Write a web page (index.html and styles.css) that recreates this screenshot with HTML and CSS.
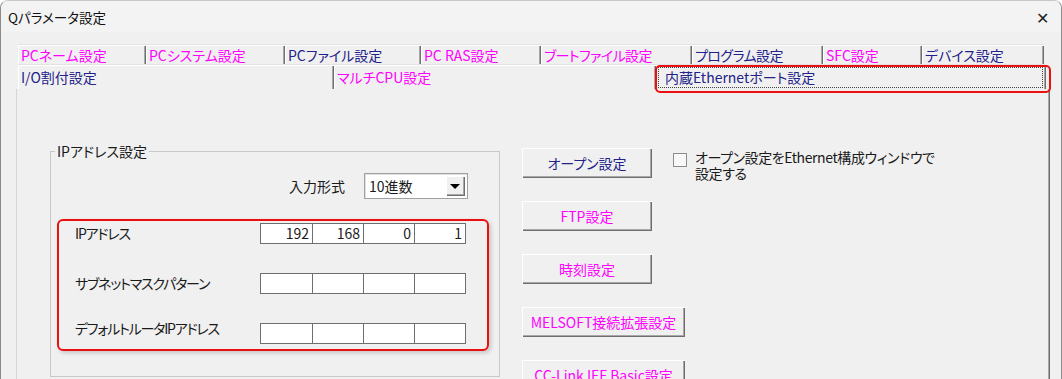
FILE: index.html
```html
<!DOCTYPE html>
<html lang="ja">

<head>
    <meta charset="UTF-8">
    <title>Qパラメータ設定</title>
    <link rel="stylesheet" href="styles.css">
</head>

<body>
    <div class="window">
        <div class="titlebar">
            <span class="title">Qパラメータ設定</span>
            <span class="close">✕</span>
        </div>

        <div class="dialog">
            <div class="tab-row">
                <div class="tab pink w-name">PCネーム設定</div>
                <div class="tab pink w-sys">PCシステム設定</div>
                <div class="tab navy w-file">PCファイル設定</div>
                <div class="tab pink w-ras">PC RAS設定</div>
                <div class="tab pink w-boot">ブートファイル設定</div>
                <div class="tab navy w-prog">プログラム設定</div>
                <div class="tab pink w-sfc">SFC設定</div>
                <div class="tab navy w-dev">デバイス設定</div>
            </div>
            <div class="tab-row second">
                <div class="tab navy w-io">I/O割付設定</div>
                <div class="tab pink w-multi">マルチCPU設定</div>
                <div class="tab navy w-eth selected">内蔵Ethernetポート設定</div>
            </div>

            <div class="panel">
                <fieldset class="group">
                    <legend>IPアドレス設定</legend>

                    <div class="format-row">
                        <span>入力形式</span>
                        <div class="select">
                            <span class="select-value">10進数</span>
                            <span class="select-arrow"></span>
                        </div>
                    </div>

                    <div class="ip-box">
                        <div class="ip-row">
                            <span class="ip-label">IPアドレス</span>
                            <div class="ip-fields">
                                <span class="cell">192</span>
                                <span class="cell">168</span>
                                <span class="cell">0</span>
                                <span class="cell">1</span>
                            </div>
                        </div>
                        <div class="ip-row">
                            <span class="ip-label">サブネットマスクパターン</span>
                            <div class="ip-fields">
                                <span class="cell"></span>
                                <span class="cell"></span>
                                <span class="cell"></span>
                                <span class="cell"></span>
                            </div>
                        </div>
                        <div class="ip-row">
                            <span class="ip-label up">デフォルトルータIPアドレス</span>
                            <div class="ip-fields">
                                <span class="cell"></span>
                                <span class="cell"></span>
                                <span class="cell"></span>
                                <span class="cell"></span>
                            </div>
                        </div>
                    </div>
                </fieldset>

                <div class="buttons">
                    <div class="open-row">
                        <button class="btn navy">オープン設定</button>
                        <label class="check">
                            <span class="box"></span>
                            <span class="check-text">オープン設定をEthernet構成ウィンドウで<br>設定する</span>
                        </label>
                    </div>
                    <button class="btn pink">FTP設定</button>
                    <button class="btn pink">時刻設定</button>
                    <button class="btn pink wide">MELSOFT接続拡張設定</button>
                    <button class="btn pink wide">CC-Link IEF Basic設定</button>
                </div>
            </div>
        </div>
    </div>
</body>

</html>
```

FILE: styles.css
```css
html,
body {
    margin: 0;
    height: 379px;
    overflow: hidden;
    background-color: #ffffff;
}

body {
    font-family: "Noto Sans CJK JP", "Noto Sans", sans-serif;
    font-feature-settings: "palt";
    font-size: 14px;
    color: #1a1a1a;
}

.window {
    width: 1062px;
    height: 379px;
    box-sizing: border-box;
    background-color: #f0f0f0;
    border-left: 1px solid #8a8a8a;
    border-right: 1px solid #8a8a8a;
    border-top: 1px solid #c8c8c8;
    border-radius: 8px 8px 0 0;
    overflow: hidden;
}

.titlebar {
    height: 31px;
    display: flex;
    align-items: center;
    justify-content: space-between;
    padding: 0 12px 0 7px;
    background-color: #f3f3f3;
}

.title {
    font-size: 13.5px;
    color: #111;
}

.close {
    font-size: 16px;
    color: #222;
}

.dialog {
    padding: 12px 0 0 15px;
}

/* tabs */

.tab-row {
    display: flex;
    margin-left: 2px;
    height: 20px;
}

.tab-row.second {
    height: 25px;
}

.tab {
    position: relative;
    box-sizing: border-box;
    padding-left: 3px;
    line-height: 20px;
    white-space: nowrap;
    border-top: 1px solid #e2e2e2;
    box-shadow: inset 1px 1px 0 #ffffff, inset -1px 0 0 #6e6e6e, inset -2px 0 0 #a8a8a8;
}

.second .tab {
    line-height: 24px;
}

.w-name { width: 128px; }
.w-sys { width: 139px; }
.w-file { width: 136px; }
.w-ras { width: 120px; }
.w-boot { width: 151px; letter-spacing: -0.6px; }
.w-prog { width: 131px; letter-spacing: -0.6px; }
.w-sfc { width: 99px; }
.w-dev { width: 122px; }
.w-io { width: 316px; }
.w-multi { width: 322px; }
.w-eth { width: 390px; padding-left: 9px; }

.navy {
    color: #22228a;
}

.pink {
    color: #ff00ff;
}

.tab.selected::before {
    content: "";
    position: absolute;
    left: 2px;
    top: 2px;
    right: 3px;
    bottom: 1px;
    border: 1px dotted #444;
}

.tab.selected::after {
    content: "";
    position: absolute;
    left: -1px;
    top: 0;
    right: -5px;
    bottom: -4px;
    border: 2px solid #e81010;
    border-radius: 5px;
}

/* panel */

.panel {
    display: flex;
    align-items: flex-start;
    width: 1033px;
    height: 300px;
    box-sizing: border-box;
    padding: 54px 0 0 33px;
    border-left: 1px solid #d6d6d6;
    border-right: 1px solid #a8a8a8;
    box-shadow: 1px 0 0 #6e6e6e;
}

.group {
    margin: 0;
    padding: 0;
    width: 450px;
    height: 234px;
    box-sizing: border-box;
    border: 1px solid #c8c8c8;
}

.group legend {
    margin-left: 4px;
    padding: 0 2px;
    line-height: 16px;
}

.format-row {
    display: flex;
    justify-content: flex-end;
    align-items: center;
    gap: 19px;
    margin-top: 14px;
    padding-right: 31px;
}

.select {
    display: flex;
    align-items: center;
    justify-content: space-between;
    width: 104px;
    height: 26px;
    box-sizing: border-box;
    padding: 2px;
    background-color: #ffffff;
    border: 1px solid #a0a0a0;
    box-shadow: inset 1px 1px 0 #e0e0e0;
}

.select-value {
    padding-left: 2px;
    line-height: 20px;
}

.select-arrow {
    position: relative;
    width: 19px;
    height: 20px;
    background-color: #f0f0f0;
    box-shadow: inset 1px 1px 0 #ffffff, inset -1px -1px 0 #6e6e6e, inset -2px -2px 0 #a8a8a8;
}

.select-arrow::after {
    content: "";
    position: absolute;
    left: 4px;
    top: 8px;
    border-left: 5px solid transparent;
    border-right: 5px solid transparent;
    border-top: 5px solid #000;
}

.ip-box {
    display: flex;
    flex-direction: column;
    gap: 30px;
    margin: 20px 0 0 6px;
    width: 432px;
    height: 132px;
    box-sizing: border-box;
    padding: 2px 21px 0 16px;
    border: 2px solid #e81010;
    border-radius: 6px;
    box-shadow: 2px 2px 4px rgba(0, 0, 0, 0.18);
}

.ip-row {
    display: flex;
    justify-content: space-between;
    align-items: center;
    height: 20px;
}

.ip-label {
    line-height: 20px;
    letter-spacing: -1.2px;
}

.ip-label.up {
    margin-top: -11px;
}

.ip-fields {
    display: flex;
    border: 1px solid #6e6e6e;
    background-color: #ffffff;
}

.cell {
    width: 51px;
    height: 19px;
    box-sizing: border-box;
    padding-right: 3px;
    text-align: right;
    line-height: 19px;
    border-left: 1px solid #6e6e6e;
}

.cell:first-child {
    border-left: none;
}

/* buttons */

.buttons {
    display: flex;
    flex-direction: column;
    align-items: flex-start;
    gap: 23px;
    margin: 5px 0 0 22px;
}

.open-row {
    display: flex;
    align-items: flex-start;
    gap: 21px;
    height: 30px;
}

.btn {
    width: 130px;
    height: 30px;
    padding: 0;
    font-family: inherit;
    font-size: 14px;
    font-feature-settings: "palt";
    background-color: #f0f0f0;
    border: none;
    box-shadow: inset 1px 1px 0 #ffffff, inset 0 1px 0 #e3e3e3, inset -1px -1px 0 #6e6e6e, inset -2px -2px 0 #a8a8a8;
}

.btn.wide {
    width: 163px;
}

.check {
    display: flex;
    align-items: flex-start;
    gap: 8px;
    margin-top: 1px;
}

.box {
    width: 14px;
    height: 14px;
    box-sizing: border-box;
    margin-top: 4px;
    background-color: #f7f7f7;
    border: 1px solid #8c8c8c;
}

.check-text {
    line-height: 16px;
    letter-spacing: -0.4px;
    color: #1a1a1a;
}
```
